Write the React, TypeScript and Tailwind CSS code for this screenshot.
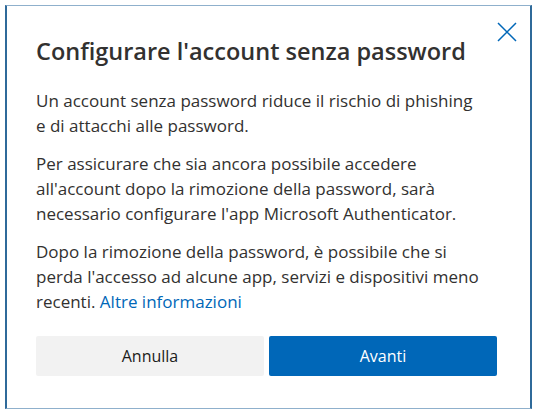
export default function App() {
  return (
    <div className="w-[537px] h-[412px] bg-white pt-[5px] pl-[5px] font-['Segoe_UI','Open_Sans',sans-serif]">
      <div className="relative w-[527px] h-[404px] bg-white border-x-2 border-x-[#2f6a9a] border-y border-y-[#8fb0cc] pl-[29px] pr-[33px] pt-[29px]">
        <button className="absolute top-[16px] right-[13px] p-0 text-[#0067b8]">
          {/* close icon */}
          <svg width="20" height="20" viewBox="0 0 20 20" fill="none" stroke="currentColor" strokeWidth="1.5">
            <path d="M1 1L19 19M19 1L1 19" />
          </svg>
        </button>

        <h1 className="text-[23.5px] leading-[32px] font-semibold text-[#323130]">
          Configurare l'account senza password
        </h1>

        <div className="mt-[21px] space-y-[13px] text-[17px] leading-[25px] text-[#323130]">
          <p>
            Un account senza password riduce il rischio di phishing
            <br />e di attacchi alle password.
          </p>
          <p>
            Per assicurare che sia ancora possibile accedere
            <br />
            all'account dopo la rimozione della password, sarà
            <br />
            necessario configurare l'app Microsoft Authenticator.
          </p>
          <p>
            Dopo la rimozione della password, è possibile che si
            <br />
            perda l'accesso ad alcune app, servizi e dispositivi meno
            <br />
            recenti. <a className="text-[#0067b8]">Altre informazioni</a>
          </p>
        </div>

        <div className="mt-[22px] flex gap-[5px]">
          <button className="w-[228px] h-[40px] bg-[#f2f2f2] text-[16px] text-[#1b1b1b] rounded-[2px]">
            Annulla
          </button>
          <button className="w-[228px] h-[40px] bg-[#0067b8] text-[16px] text-white rounded-[2px]">
            Avanti
          </button>
        </div>
      </div>
    </div>
  );
}
